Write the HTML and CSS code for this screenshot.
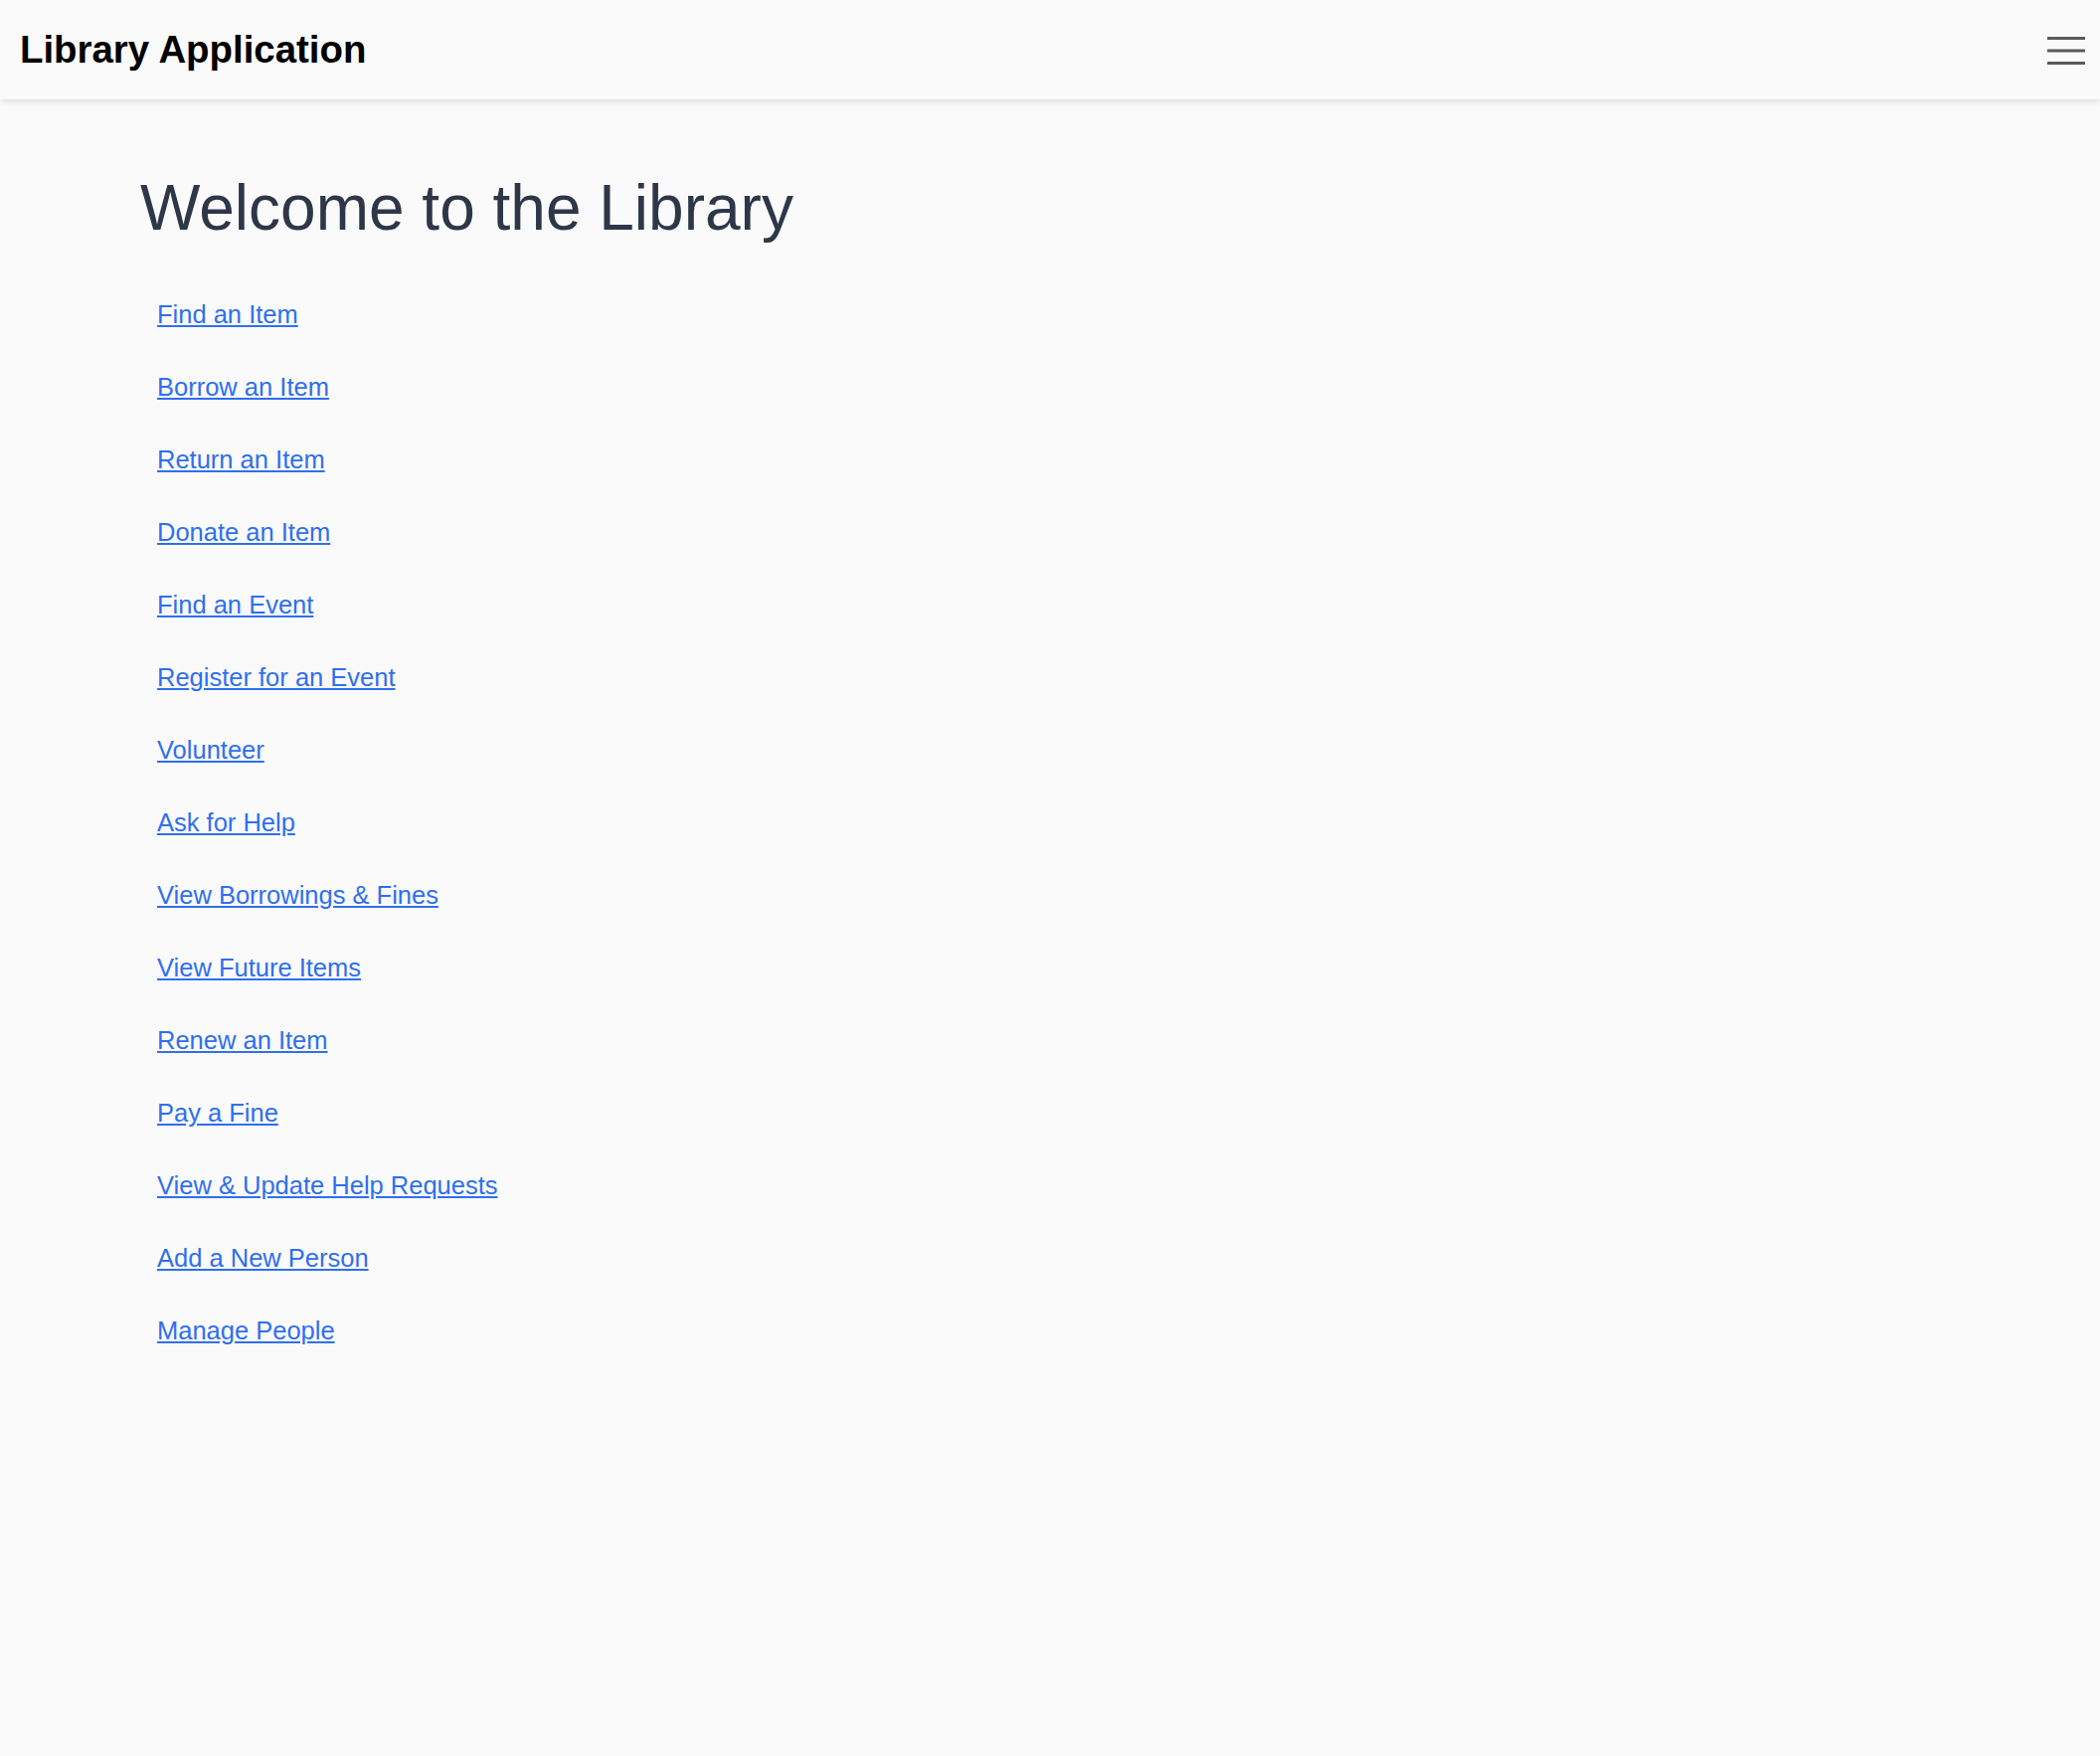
FILE: index.html
```html
<!DOCTYPE html>
<html lang="en">
<head>
<meta charset="utf-8">
<title>Library Application</title>
<link rel="stylesheet" href="styles.css">
</head>
<body>
<header class="topbar">
  <div class="brand">Library Application</div>
  <button class="menu" aria-label="Menu">
    <svg width="38" height="30" viewBox="0 0 38 30"><g stroke="#5a5a5c" stroke-width="3"><line x1="0" y1="3.5" x2="38" y2="3.5"/><line x1="0" y1="16" x2="38" y2="16"/><line x1="0" y1="28.5" x2="38" y2="28.5"/></g></svg>
  </button>
</header>
<main class="content">
  <h1 class="welcome">Welcome to the Library</h1>
  <ul class="links">
    <li><a href="#">Find an Item</a></li>
    <li><a href="#">Borrow an Item</a></li>
    <li><a href="#">Return an Item</a></li>
    <li><a href="#">Donate an Item</a></li>
    <li><a href="#">Find an Event</a></li>
    <li><a href="#">Register for an Event</a></li>
    <li><a href="#">Volunteer</a></li>
    <li><a href="#">Ask for Help</a></li>
    <li><a href="#">View Borrowings &amp; Fines</a></li>
    <li><a href="#">View Future Items</a></li>
    <li><a href="#">Renew an Item</a></li>
    <li><a href="#">Pay a Fine</a></li>
    <li><a href="#">View &amp; Update Help Requests</a></li>
    <li><a href="#">Add a New Person</a></li>
    <li><a href="#">Manage People</a></li>
  </ul>
</main>
</body>
</html>
```
FILE: styles.css
```css
html, body {
  margin: 0;
  padding: 0;
  background: #fafafa;
  font-family: "Liberation Sans", Arial, sans-serif;
}
.topbar {
  height: 100px;
  box-sizing: border-box;
  padding: 0 15px 0 20px;
  display: flex;
  align-items: center;
  justify-content: space-between;
  background: #fafafa;
  box-shadow: 0 2px 6px rgba(0, 0, 0, 0.12);
}
.brand {
  font-size: 38.4px;
  font-weight: bold;
  color: #000;
}
.menu {
  background: none;
  border: 0;
  padding: 0;
  display: flex;
}
.content {
  padding-left: 141px;
}
.welcome {
  margin: 73px 0 0 0;
  font-size: 64px;
  font-weight: normal;
  color: #2d3748;
  line-height: 1.15;
}
.links {
  list-style: none;
  margin: 33px 0 0 0;
  padding: 0 0 0 17px;
}
.links li {
  font-size: 25.5px;
  line-height: 73px;
}
.links a {
  color: #2f6fee;
  text-decoration: underline;
}
```
